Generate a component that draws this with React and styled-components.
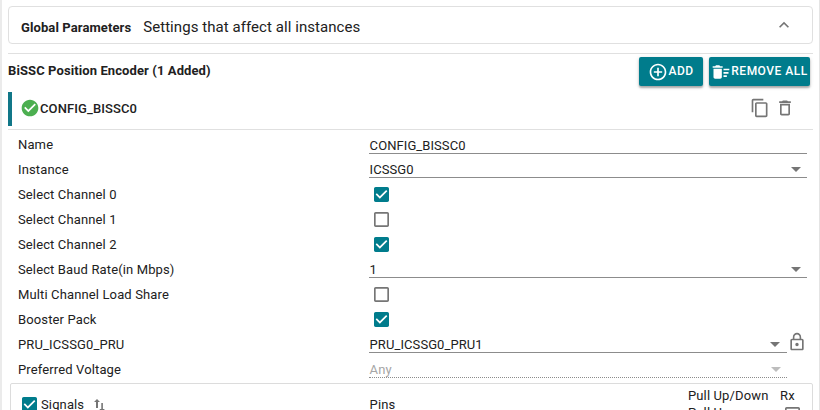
import React from 'react';
import styled, { createGlobalStyle, css } from 'styled-components';

const Global = createGlobalStyle`
  * { box-sizing: border-box; }
  body { margin: 0; background: #fff; }
`;

const Page = styled.main`
  width: 820px;
  height: 410px;
  overflow: hidden;
  padding: 6px 6px 0;
  border-left: 2px solid #ebebeb;
  border-right: 1px solid #e4e4e4;
  background: #fff;
  color: #212121;
  font: 13px/25px Roboto, sans-serif;
  letter-spacing: 0.13px;
  white-space: nowrap;
`;

const GlobalCard = styled.section`
  display: flex;
  align-items: center;
  height: 38px;
  width: 805px;
  padding: 5px 18px 0 12px;
  border: 1px solid #e0e0e0;
  border-radius: 4px;
`;
const CardTitle = styled.h2`
  margin: 0 12px 0 0;
  font-size: 13px;
  font-weight: 700;
  letter-spacing: 0.1px;
`;
const CardText = styled.span`
  flex: 1;
  font-size: 15px;
  letter-spacing: 0.06px;
`;
const CardToggle = styled.span`
  display: flex;
  margin-top: -6px;
`;

const ModuleHeader = styled.header`
  display: flex;
  align-items: flex-start;
  width: 805px;
  height: 39px;
  margin-top: 9px;
  padding: 3px 3px 0 0;
  border-top: 1px solid #e0e0e0;
`;
const ModuleTitle = styled.h2`
  flex: 1;
  margin: 1px 0 0;
  font-size: 13px;
  font-weight: 700;
  letter-spacing: 0.1px;
`;
const Button = styled.button`
  display: flex;
  align-items: center;
  justify-content: center;
  width: ${(p) => p.$width}px;
  height: 29px;
  margin-left: 6px;
  padding: 0;
  border: 0;
  border-radius: 2px;
  background: #007c8c;
  color: #fff;
  font: 500 12px Roboto, sans-serif;
  letter-spacing: 0.5px;
  box-shadow: 0 2px 2px rgba(0, 0, 0, 0.28), 0 1px 4px rgba(0, 0, 0, 0.15);
`;
const ButtonLabel = styled.span`
  padding-bottom: 1px;
`;

const InstanceRow = styled.div`
  display: flex;
  align-items: center;
  width: 805px;
  height: 34px;
  padding: 0 18px 2px 8px;
  border-left: 4px solid #117788;
`;
const InstanceName = styled.span`
  flex: 1;
  font-weight: 500;
  letter-spacing: 0.1px;
`;
const Actions = styled.div`
  display: flex;
  gap: 5px;
  padding-bottom: 1px;
  color: #757575;
`;

const Form = styled.div`
  width: 805px;
  margin-top: 3px;
  padding: 2px 6px 0 10px;
  border-top: 1px solid #e0e0e0;
`;
const Row = styled.div`
  display: grid;
  grid-template-columns: 351px 1fr;
  height: 25px;
`;
const Field = styled.div`
  display: flex;
  align-items: center;
  justify-content: space-between;
  height: ${(p) => (p.$input ? 22 : 21)}px;
  margin-right: ${(p) => (p.$short ? 20 : 0)}px;
  padding: 5px 6.5px 0 0.6px;
  border-bottom: 1px solid #8c8c8c;
  ${(p) => p.$disabled && css`
    color: #a6a6a6;
    border-bottom: 1px dotted #8c8c8c;
  `}
`;
const FieldValue = styled.span`
  letter-spacing: 0.08px;
`;
const LockedField = styled.div`
  display: grid;
  grid-template-columns: 417.5px 20px;
`;
const CheckCell = styled.div`
  display: flex;
  align-items: center;
  padding-left: 5px;
`;
const LockButton = styled.span`
  display: flex;
  color: #757575;
`;

const PinTable = styled.section`
  display: grid;
  grid-template-columns: 358.6px 318.4px 92px 1fr;
  width: 803px;
  height: 60px;
  margin: 1px 0 0 2px;
  border: 1px solid #dcdcdc;
  border-radius: 2px;
`;
const SignalHead = styled.div`
  display: flex;
  align-items: center;
  height: 25px;
  margin-top: 8px;
  padding-left: 11px;
`;
const SignalLabel = styled.span`
  margin: 0 10px 0 4px;
`;
const PinsHead = styled.div`
  margin-top: 8px;
`;
const PullHead = styled.div`
  line-height: 17px;
  padding-top: 3px;
`;
const RxHead = styled(PullHead)`
  display: flex;
  flex-direction: column;
`;
const RxBox = styled.span`
  display: flex;
  margin: 3px 0 0 5px;
`;

const paths = {
  up: 'M12 8l-6 6 1.41 1.41L12 10.83l4.59 4.58L18 14z',
  add: 'M13 7h-2v4H7v2h4v4h2v-4h4v-2h-4V7zm-1-5C6.48 2 2 6.48 2 12s4.48 10 10 10 10-4.48 10-10S17.52 2 12 2zm0 18c-4.41 0-8-3.59-8-8s3.59-8 8-8 8 3.59 8 8-3.59 8-8 8z',
  sweep: 'M15 16h4v2h-4zm0-8h7v2h-7zm0 4h6v2h-6zM3 18c0 1.1.9 2 2 2h6c1.1 0 2-.9 2-2V8H3v10zM14 5h-3l-1-1H6L5 5H2v2h12z',
  copy: 'M16 1H4c-1.1 0-2 .9-2 2v14h2V3h12V1zm3 4H8c-1.1 0-2 .9-2 2v14c0 1.1.9 2 2 2h11c1.1 0 2-.9 2-2V7c0-1.1-.9-2-2-2zm0 16H8V7h11v14z',
  trash: 'M6 19c0 1.1.9 2 2 2h8c1.1 0 2-.9 2-2V7H6v12zM8 9h8v10H8V9zm7.5-5l-1-1h-5l-1 1H5v2h14V4z',
  ok: 'M12 2C6.48 2 2 6.48 2 12s4.48 10 10 10 10-4.48 10-10S17.52 2 12 2zm-2 15l-5-5 1.41-1.41L10 14.17l7.59-7.59L19 8l-9 9z',
  on: 'M19 3H5c-1.11 0-2 .9-2 2v14c0 1.1.89 2 2 2h14c1.11 0 2-.9 2-2V5c0-1.1-.89-2-2-2zm-9 14l-5-5 1.41-1.41L10 14.17l7.59-7.59L19 8l-9 9z',
  off: 'M19 5v14H5V5h14m0-2H5c-1.1 0-2 .9-2 2v14c0 1.1.9 2 2 2h14c1.1 0 2-.9 2-2V5c0-1.1-.9-2-2-2z',
  lock: 'M12 17c1.1 0 2-.9 2-2s-.9-2-2-2-2 .9-2 2 .9 2 2 2zm6-9h-1V6c0-2.76-2.24-5-5-5S7 3.24 7 6v2H6c-1.1 0-2 .9-2 2v10c0 1.1.9 2 2 2h12c1.1 0 2-.9 2-2V10c0-1.1-.9-2-2-2zM8.9 6c0-1.71 1.39-3.1 3.1-3.1s3.1 1.39 3.1 3.1v2H8.9V6zM18 20H6V10h12v10z',
};

const Icon = ({ name, size = 20, color = 'currentColor' }) => (
  <svg width={size} height={size} viewBox="0 0 24 24" fill={color} aria-hidden="true">
    <path d={paths[name]} />
  </svg>
);

const SwapIcon = () => (
  <svg width="12" height="14" viewBox="0 0 12 14" fill="#757575" aria-hidden="true">
    <path d="M3 1l3 3H4v6H2V4H0zM7.3 5h1.6v6h2l-2.8 3-2.8-3h2z" />
  </svg>
);

const Arrow = ({ color = '#757575' }) => (
  <svg width="10" height="5" viewBox="0 0 10 5" fill={color} aria-hidden="true">
    <path d="M0 0h10L5 5z" />
  </svg>
);

const Check = ({ checked }) => (
  <svg width="15" height="15" viewBox="3 3 18 18" fill={checked ? '#007c8c' : '#757575'} aria-hidden="true">
    <path d={checked ? paths.on : paths.off} />
  </svg>
);

const Select = ({ value, short, disabled }) => (
  <Field $short={short} $disabled={disabled}>
    <FieldValue>{value}</FieldValue>
    <Arrow color={disabled ? '#bdbdbd' : '#757575'} />
  </Field>
);

const CheckRow = ({ label, checked }) => (
  <Row>
    <span>{label}</span>
    <CheckCell><Check checked={checked} /></CheckCell>
  </Row>
);

export default function App() {
  return (
    <Page>
      <Global />
      <GlobalCard>
        <CardTitle>Global Parameters</CardTitle>
        <CardText>Settings that affect all instances</CardText>
        <CardToggle><Icon name="up" color="#757575" /></CardToggle>
      </GlobalCard>
      <ModuleHeader>
        <ModuleTitle>BiSSC Position Encoder (1 Added)</ModuleTitle>
        <Button $width={64}><Icon name="add" /><ButtonLabel>ADD</ButtonLabel></Button>
        <Button $width={101}><Icon name="sweep" /><ButtonLabel>REMOVE ALL</ButtonLabel></Button>
      </ModuleHeader>
      <InstanceRow>
        <Icon name="ok" color="#4caf50" />
        <InstanceName>CONFIG_BISSC0</InstanceName>
        <Actions><Icon name="copy" /><Icon name="trash" /></Actions>
      </InstanceRow>
      <Form>
        <Row>
          <span>Name</span>
          <Field $input><FieldValue>CONFIG_BISSC0</FieldValue></Field>
        </Row>
        <Row><span>Instance</span><Select value="ICSSG0" /></Row>
        <CheckRow label="Select Channel 0" checked />
        <CheckRow label="Select Channel 1" />
        <CheckRow label="Select Channel 2" checked />
        <Row><span>Select Baud Rate(in Mbps)</span><Select value="1" /></Row>
        <CheckRow label="Multi Channel Load Share" />
        <CheckRow label="Booster Pack" checked />
        <Row>
          <span>PRU_ICSSG0_PRU</span>
          <LockedField>
            <Select value="PRU_ICSSG0_PRU1" />
            <LockButton><Icon name="lock" /></LockButton>
          </LockedField>
        </Row>
        <Row><span>Preferred Voltage</span><Select value="Any" short disabled /></Row>
      </Form>
      <PinTable>
        <SignalHead>
          <Check checked />
          <SignalLabel>Signals</SignalLabel>
          <SwapIcon />
        </SignalHead>
        <PinsHead>Pins</PinsHead>
        <PullHead>Pull Up/Down<br />Pull Up</PullHead>
        <RxHead>Rx<RxBox><Check /></RxBox></RxHead>
      </PinTable>
    </Page>
  );
}
